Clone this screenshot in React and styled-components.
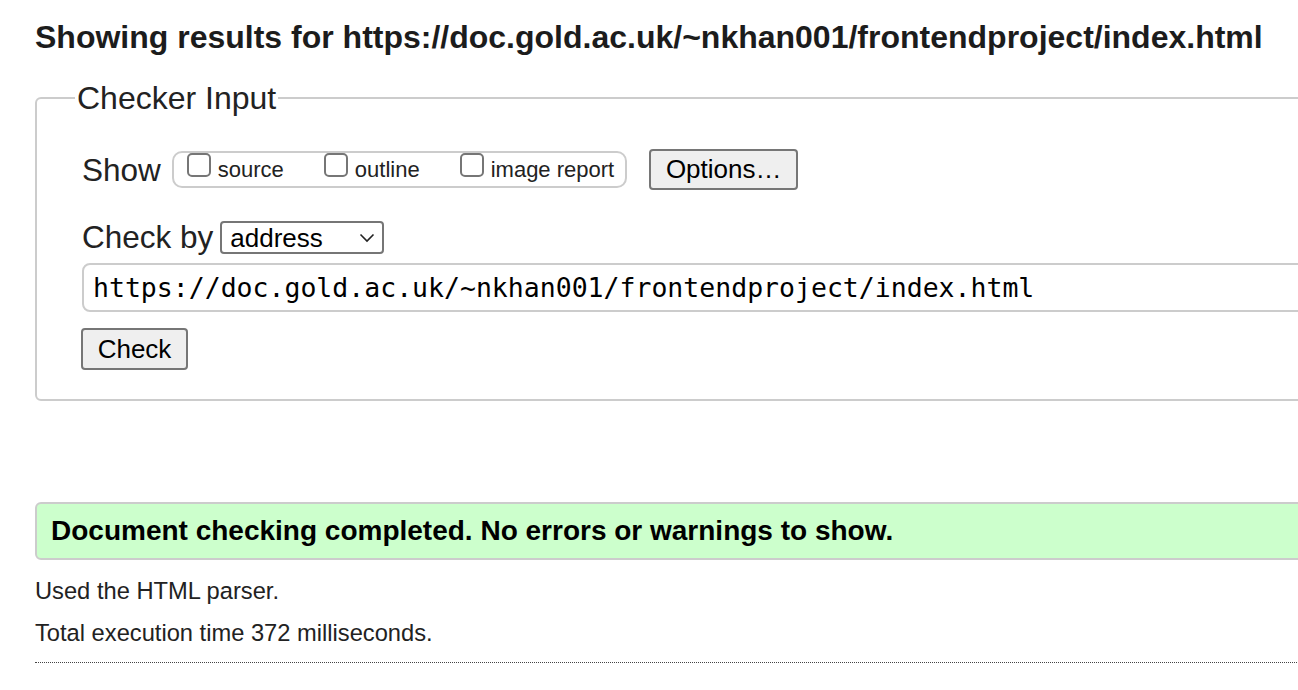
import React from 'react';
import styled, { createGlobalStyle } from 'styled-components';

const Global = createGlobalStyle`
  html, body { margin: 0; padding: 0; background: #fff; overflow: hidden; }
  body { font-family: "Liberation Sans", Arial, sans-serif; color: #222; }
`;

const Page = styled.main`
  width: 1400px;
  padding: 19px 0 0 35px;
`;

const Title = styled.h2`
  margin: 0;
  font-size: 32px;
  line-height: 36px;
  font-weight: bold;
  color: #1c1c1c;
`;

const Fieldset = styled.fieldset`
  margin: 25px 0 0;
  padding: 0 0 29px 45px;
  border: 2px solid #ccc;
  border-radius: 6px;
  min-width: 0;
`;

const Legend = styled.legend`
  margin-left: -7px;
  padding: 0 2px;
  font-size: 32px;
  line-height: 36px;
`;

const Row = styled.div`
  display: flex;
  align-items: center;
  margin-top: ${p => p.$top || 0}px;
`;

const Label = styled.span`
  font-size: 31.5px;
  line-height: 36px;
`;

const Group = styled.div`
  box-sizing: border-box;
  display: flex;
  gap: 40px;
  height: 37px;
  margin-left: 11px;
  padding: 0 11px 0 13px;
  border: 2px solid #ccc;
  border-radius: 10px;
`;

const Option = styled.label`
  display: flex;
  align-items: flex-start;
  gap: 7px;
`;

const Box = styled.input.attrs({ type: 'checkbox' })`
  appearance: none;
  box-sizing: border-box;
  width: 24px;
  height: 24px;
  margin: 0;
  border: 2px solid #767676;
  border-radius: 5px;
  background: #fff;
`;

const OptionText = styled.span`
  font-size: 22px;
  line-height: 33px;
`;

const Button = styled.button`
  box-sizing: border-box;
  width: ${p => p.$w}px;
  height: ${p => p.$h}px;
  margin-left: ${p => p.$left || 0}px;
  padding: 0;
  font-family: "Liberation Sans", Arial, sans-serif;
  font-size: 26px;
  color: #000;
  background: #efefef;
  border: 2px solid #767676;
  border-radius: 4px;
`;

const SelectWrap = styled.div`
  position: relative;
  margin-left: 7px;
`;

const Select = styled.select`
  appearance: none;
  box-sizing: border-box;
  width: 164px;
  height: 33px;
  padding: 0 0 0 8px;
  font-family: "Liberation Sans", Arial, sans-serif;
  font-size: 26px;
  color: #000;
  background: #fff;
  border: 2px solid #767676;
  border-radius: 4px;
`;

const Chevron = styled.svg`
  position: absolute;
  right: 9px;
  top: 12px;
  pointer-events: none;
`;

const UrlInput = styled.input`
  box-sizing: border-box;
  display: block;
  width: calc(100% + 40px);
  height: 49px;
  margin-top: 8px;
  padding: 0 0 0 9px;
  font-family: "DejaVu Sans Mono", "Liberation Mono", monospace;
  font-size: 26.5px;
  color: #000;
  border: 2px solid #ccc;
  border-radius: 8px;
`;

const Notice = styled.div`
  box-sizing: border-box;
  height: 58px;
  margin-top: 101px;
  padding-left: 14px;
  display: flex;
  align-items: center;
  background: #ccffcc;
  border: 2px solid #ccc;
  border-radius: 6px;
  font-size: 28px;
  font-weight: bold;
  color: #000;
`;

const Info = styled.p`
  margin: ${p => p.$top}px 0 0;
  font-size: 23.7px;
  line-height: 26px;
`;

const Rule = styled.hr`
  margin: 16px 0 0;
  border: 0;
  border-top: 1px dotted #444;
`;

export default function App() {
  return (
    <Page>
      <Global />
      <Title>Showing results for https://doc.gold.ac.uk/~nkhan001/frontendproject/index.html</Title>
      <Fieldset>
        <Legend>Checker Input</Legend>
        <Row $top={33}>
          <Label>Show</Label>
          <Group>
            {['source', 'outline', 'image report'].map(t => (
              <Option key={t}>
                <Box />
                <OptionText>{t}</OptionText>
              </Option>
            ))}
          </Group>
          <Button $w={149} $h={41} $left={22}>Options…</Button>
        </Row>
        <Row $top={29}>
          <Label>Check by</Label>
          <SelectWrap>
            <Select defaultValue="address">
              <option value="address">address</option>
              <option value="file">file upload</option>
              <option value="text">text input</option>
            </Select>
            <Chevron width="16" height="10" viewBox="0 0 16 10">
              <path d="M1.5 1.5 L8 8 L14.5 1.5" fill="none" stroke="#222" strokeWidth="1.6" />
            </Chevron>
          </SelectWrap>
        </Row>
        <UrlInput defaultValue="https://doc.gold.ac.uk/~nkhan001/frontendproject/index.html" />
        <Row $top={16}>
          <Button $w={107} $h={42} $left={-1}>Check</Button>
        </Row>
      </Fieldset>
      <Notice>Document checking completed. No errors or warnings to show.</Notice>
      <Info $top={18}>Used the HTML parser.</Info>
      <Info $top={16}>Total execution time 372 milliseconds.</Info>
      <Rule />
    </Page>
  );
}
